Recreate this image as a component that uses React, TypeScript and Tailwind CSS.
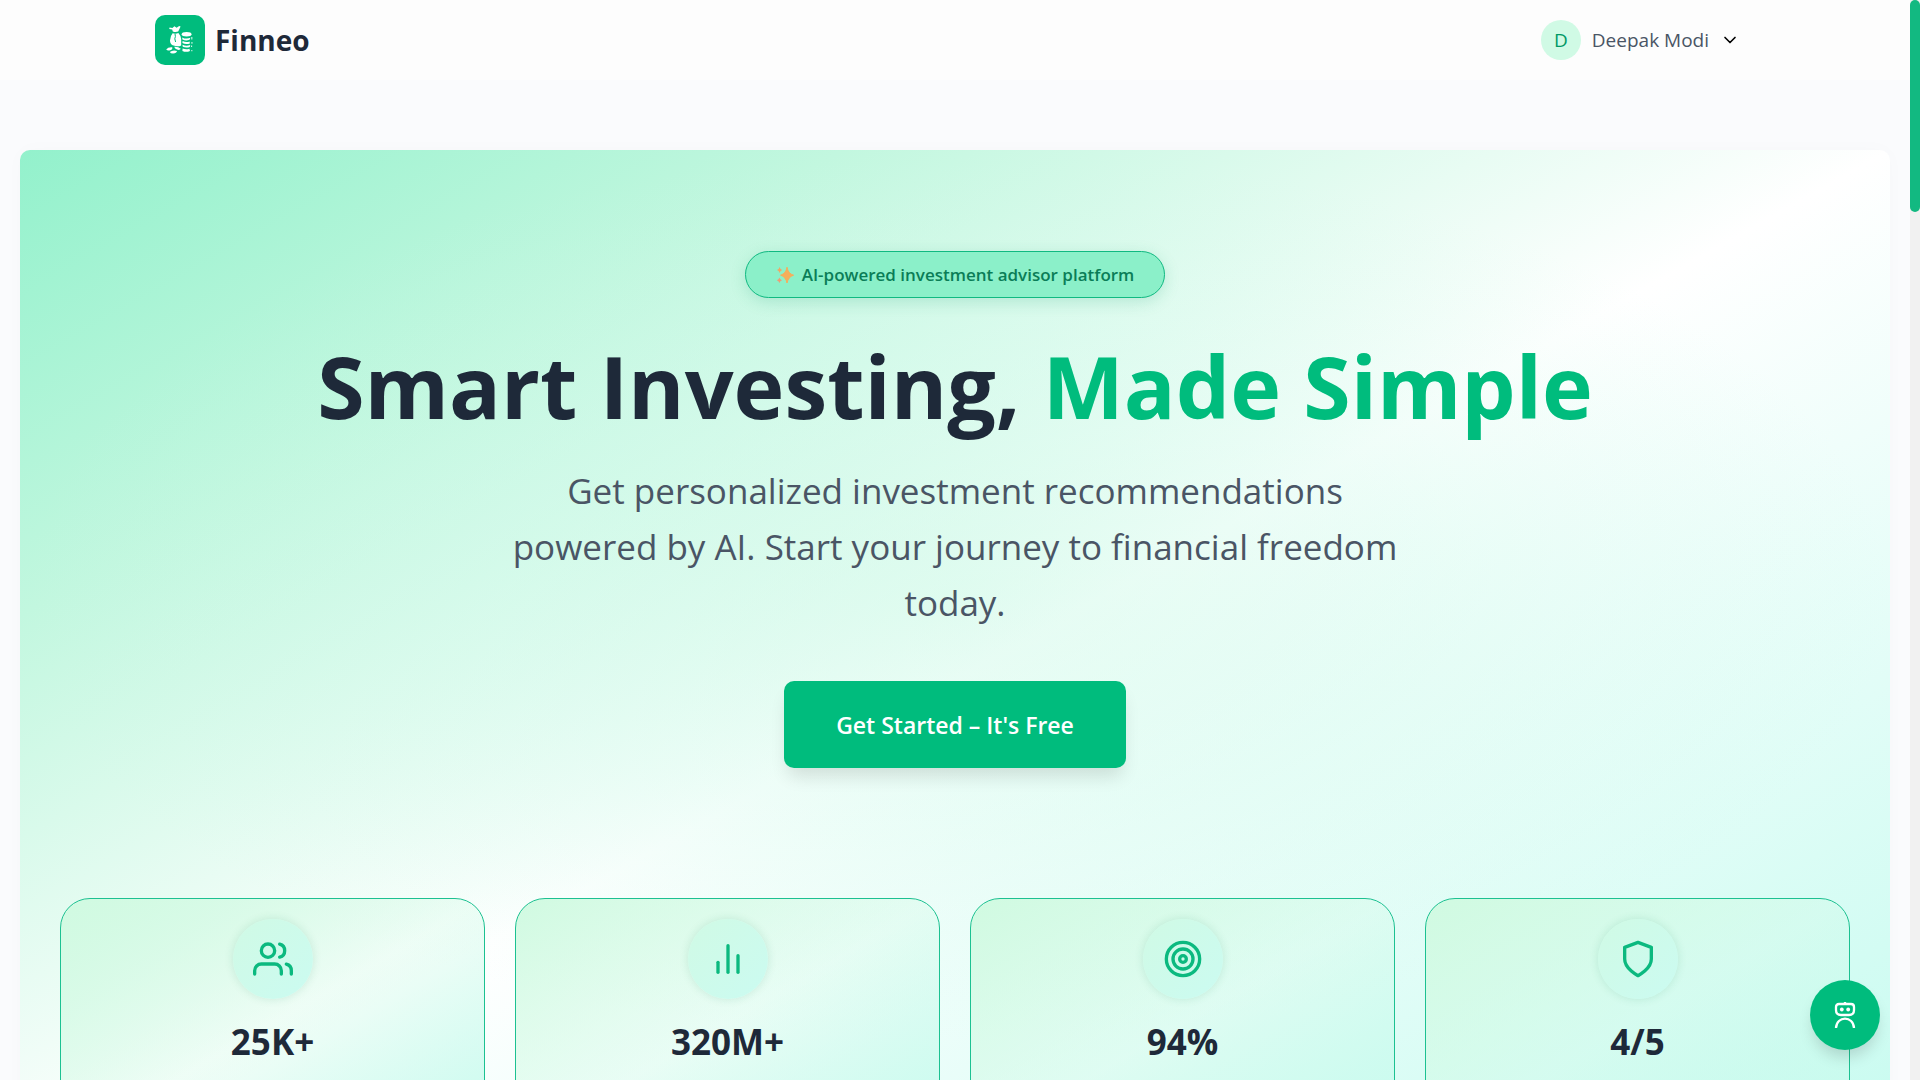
import React from "react";
import { FiBarChart2, FiChevronDown, FiShield, FiTarget, FiUsers } from "react-icons/fi";
import type { IconType } from "react-icons";

const stats: { value: string; icon: IconType }[] = [
  { value: "25K+", icon: FiUsers },
  { value: "320M+", icon: FiBarChart2 },
  { value: "94%", icon: FiTarget },
  { value: "4/5", icon: FiShield },
];

function MoneyLogo() {
  return (
    <svg viewBox="0 0 30 32" className="h-8 w-[30px]" aria-hidden="true">
      <g fill="#fff">
        <path d="M4.6 3.4 7.4 3.9 9.4 2.2 11.6 3.8 14.2 2 15.6 2.6 13.2 7.6Q10.4 8.6 7.8 7.4L7.2 5.6 4.2 4.9Z" />
        <path d="M7.6 9.2Q10.6 10.2 13.4 9Q15.8 11.6 16.2 15V21.4Q13 23 8.6 21.6Q5 20.4 5 16.4Q5.2 12 7.6 9.2Z" />
        <ellipse cx="21.6" cy="10.2" rx="4.9" ry="2.2" />
        <path d="M17.2 13.4q4 2.2 8.2.4l-.8 2q-3.6 1.3-7.2-.3zM17.6 17q3.4 1.6 7 .4l.3 2q-4 1.3-7.5-.3zM17.4 20.8q4 1.6 7.8.2l-.4 2q-3.6 1.2-7-.2zM17.6 24.4q3.6 1.5 6.8.3l.6 2.2q-4 1.8-7.6 0z" />
        <path d="M1.2 25.6Q3 22.8 7.2 23.2Q8 25.4 5.2 26.2Q2.8 27.2 1.2 25.6ZM9.2 22.8Q12.8 22.2 15.8 24.8Q14.8 26.6 12 25.6Q9.8 25 9.2 22.8ZM4.8 28Q7.6 25.6 12 26.9Q11.6 29.2 8.2 29.5Q5.6 29.6 4.8 28Z" />
        <path d="M26.4 13h.9v2.4h-.9zM26.5 18h.9v1.8h-.9zM26.2 21.6h.9v1.5h-.9zM26.4 26h.9v1.2h-.9z" />
      </g>
      <path d="M10 9.8 10.4 12.4 9.8 14.8 10.6 18" fill="none" stroke="#00bc7d" strokeWidth="1" />
    </svg>
  );
}

function Sparkles() {
  return (
    <svg viewBox="0 0 18 18" className="size-[18px]" aria-hidden="true">
      <path d="M11 1.2Q12 7.6 17.6 9.2Q12.2 10.8 11 17Q9.8 10.8 4.6 9.2Q10 7.6 11 1.2Z" fill="#f5ae5c" stroke="#f5ae5c" strokeLinejoin="round" />
      <path d="M3.6 1Q4.2 3.5 6.2 4Q4.2 4.6 3.6 7Q3 4.6 1 4Q3 3.5 3.6 1Z" fill="#efa866" />
      <path d="M3.4 11.4Q4 13.6 6 14.2Q4 14.8 3.4 17Q2.8 14.8.8 14.2Q2.8 13.6 3.4 11.4Z" fill="#ee9d76" />
    </svg>
  );
}

function RobotIcon() {
  return (
    <svg viewBox="0 0 24 28" className="h-7 w-6" fill="none" stroke="#fff" strokeWidth="2.3" aria-hidden="true">
      <path d="M12 1v2" />
      <path d="M6 3h12Q21 3 21 6v3q0 5-5 5H8q-5 0-5-5V6q0-3 3-3z" />
      <circle cx="8.8" cy="8.5" r="1.9" fill="#fff" stroke="none" />
      <circle cx="15.2" cy="8.5" r="1.9" fill="#fff" stroke="none" />
      <path d="M3 27C3.5 14.5 20.5 14.5 21 27" />
    </svg>
  );
}

function Header() {
  return (
    <header className="bg-[#fdfdfd]">
      <div className="mx-auto flex h-20 max-w-[1600px] items-center justify-between">
        <a href="#" className="flex items-center gap-[10px]">
          <span className="flex size-[50px] items-center justify-center rounded-[10px] bg-[#00bc7d]">
            <MoneyLogo />
          </span>
          <span className="text-[28px] font-bold text-[#1e2939]">Finneo</span>
        </a>
        <button type="button" className="flex items-center gap-[11px] px-[15px] text-[19px] text-[#4a5565]">
          <span className="flex size-10 items-center justify-center rounded-full bg-[#d0fae5] text-[#009966]">D</span>
          <span>Deepak Modi</span>
          <FiChevronDown className="size-5 text-black" />
        </button>
      </div>
    </header>
  );
}

function StatCard({ value, icon: Icon }: { value: string; icon: IconType }) {
  return (
    <li className="flex flex-col items-center rounded-[30px] border border-[#1cc191] bg-linear-to-br from-[#d0fae1] via-[#d0fae5]/30 to-[#c8fbef] px-5 pt-5 pb-[84px]">
      <span className="flex size-20 items-center justify-center rounded-full bg-linear-to-br from-[#d0fae5] to-[#cbfbf1] text-[#0bb97f] shadow-[0_0_10px_rgba(0,120,80,0.14)]">
        <Icon className="size-10" />
      </span>
      <strong className="mt-[22px] text-[35px] leading-[42px] font-bold text-[#1e2939]">{value}</strong>
    </li>
  );
}

function Hero() {
  return (
    <section className="mx-5 mt-[70px] rounded-[10px] bg-[radial-gradient(ellipse_50%_42%_at_50%_42%,rgba(190,248,224,0.42)_0%,rgba(200,250,232,0.3)_50%,rgba(208,250,236,0)_100%),linear-gradient(to_bottom_right,#93f1cc_0%,#c2f7df_22%,#ffffff_50%,#c4fbef_100%)] px-10 pt-[101px] pb-[60px] shadow-[0_0_20px_rgba(0,0,0,0.02)]">
      <div className="flex flex-col items-center text-center">
        <p className="flex items-center gap-2 rounded-full border border-[#10b981] bg-[#8bf0c9] px-[30px] py-3 text-[17px] leading-[21px] font-semibold text-[#0a7d57] shadow-[0_4px_16px_rgba(0,150,100,0.18)]">
          <Sparkles />
          AI-powered investment advisor platform
        </p>
        <h1 className="mt-[43px] text-[86px] leading-[90px] font-bold text-[#1e2939]">
          Smart Investing, <span className="text-[#00bc7d]">Made Simple</span>
        </h1>
        <p className="mt-8 max-w-[900px] text-[35px] leading-[56px] text-[#4a5565]">
          Get personalized investment recommendations powered by AI. Start your journey to financial freedom today.
        </p>
        <button type="button" className="mt-[50px] rounded-[10px] bg-[#00bc7d] px-[52px] pt-[27px] pb-[25px] text-[23px] leading-[35px] font-semibold text-white shadow-[0_12px_18px_-4px_rgba(0,0,0,0.12)]">
          Get Started – It's Free
        </button>
      </div>
      <ul className="mt-[130px] grid grid-cols-4 gap-[30px]">
        {stats.map((s) => (
          <StatCard key={s.value} {...s} />
        ))}
      </ul>
    </section>
  );
}

export default function App() {
  return (
    <div className="flex h-screen overflow-hidden bg-[#fafbfd] font-['Open_Sans',sans-serif]">
      <main className="min-w-0 flex-1">
        <Header />
        <Hero />
      </main>
      <div className="w-[10px] bg-[#f1f1f1]">
        <div className="h-[212px] rounded-[5px] bg-[#12b981]" />
      </div>
      <button type="button" aria-label="Open assistant" className="fixed right-10 bottom-[30px] flex size-[70px] items-center justify-center rounded-full bg-[#00bc7d] shadow-[0_10px_15px_-3px_rgba(0,0,0,0.15)]">
        <RobotIcon />
      </button>
    </div>
  );
}
